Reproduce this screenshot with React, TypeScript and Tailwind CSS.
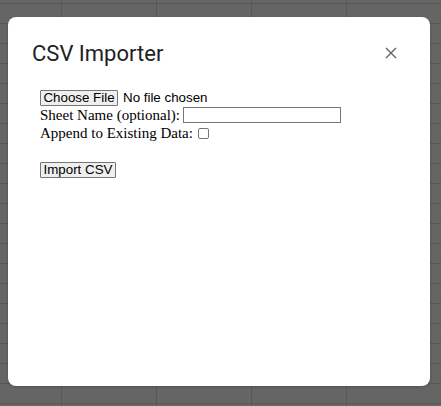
import React from "react";

export default function App() {
  return (
    <div className="relative h-[406px] w-[441px] overflow-hidden bg-[#656565] bg-[linear-gradient(to_bottom,#575757_1px,transparent_1px),linear-gradient(to_right,#575757_1px,transparent_1px)] bg-[length:95px_20px] bg-[position:61px_3px] pl-[8px] pt-[17px]">
      <div className="flex h-[369px] w-[422px] flex-col rounded-[8px] bg-white shadow-[0_1px_3px_rgba(0,0,0,0.2)]">
        <div className="flex h-[65px] items-start justify-between pl-[24px] pr-[33px] pt-[22px]">
          <div className="font-['Roboto',sans-serif] text-[22px] leading-[30px] text-[#202124]">
            CSV Importer
          </div>
          <svg width="12" height="12" viewBox="0 0 12 12" className="mt-[8px]">
            <path d="M1 1L11 11M11 1L1 11" stroke="#5f6368" strokeWidth="1.4" />
          </svg>
        </div>
        <div className="flex flex-col pl-[32px] pt-[7px] font-['Liberation_Serif',serif] text-[15px] text-black">
          <div className="flex h-[17px] items-center">
            <button className="flex h-[16px] w-[78px] items-center justify-center rounded-[1px] border border-[#767676] bg-[#efefef] font-['Liberation_Sans',Arial,sans-serif] text-[13.33px] leading-none text-black">
              Choose File
            </button>
            <span className="ml-[5px] font-['Liberation_Sans',Arial,sans-serif] text-[13.33px] leading-none">
              No file chosen
            </span>
          </div>
          <div className="flex h-[18px] items-center">
            <span className="leading-none">Sheet Name (optional):</span>
            <div className="ml-[3px] h-[16px] w-[158px] border border-[#767676] bg-white" />
          </div>
          <div className="flex h-[18px] items-center">
            <span className="leading-none">Append to Existing Data:</span>
            <div className="ml-[5px] mt-[1px] h-[11px] w-[11px] rounded-[2px] border border-[#767676] bg-white" />
          </div>
          <div className="h-[19px]" />
          <div className="flex h-[18px] items-center">
            <button className="flex h-[16px] w-[76px] items-center justify-center rounded-[1px] border border-[#767676] bg-[#efefef] font-['Liberation_Sans',Arial,sans-serif] text-[13.33px] leading-none text-black">
              Import CSV
            </button>
          </div>
        </div>
      </div>
    </div>
  );
}
